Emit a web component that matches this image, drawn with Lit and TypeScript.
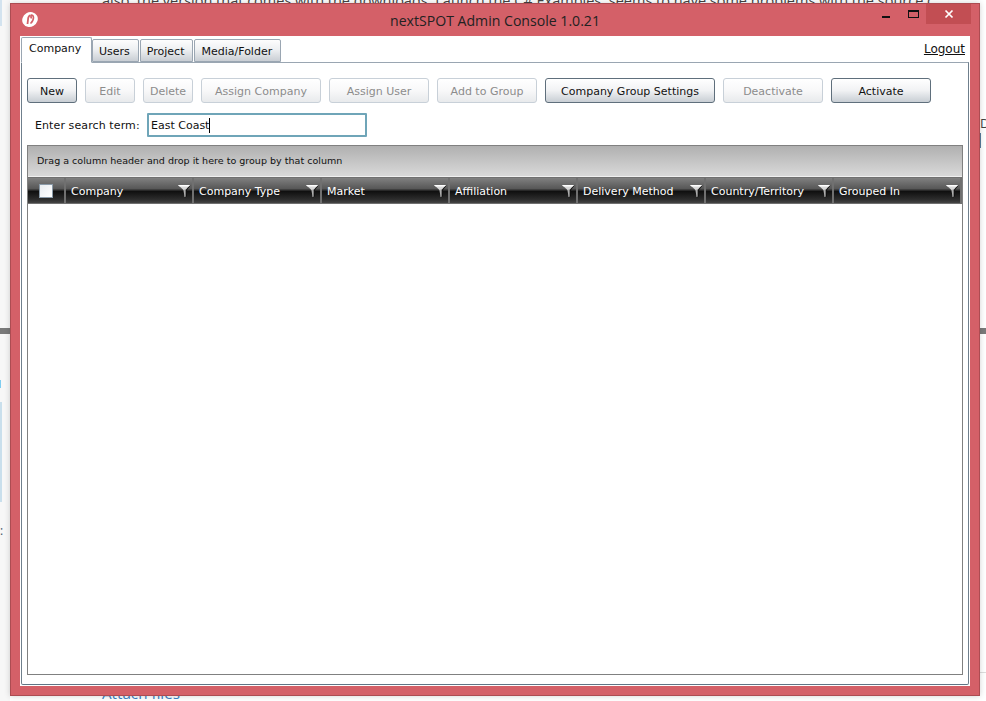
import { LitElement, html, css, svg } from "lit";
import { customElement } from "lit/decorators.js";

const actions: [string, number, boolean][] = [
  ["New", 50, true], ["Edit", 50, false], ["Delete", 50, false], ["Assign Company", 120, false],
  ["Assign User", 100, false], ["Add to Group", 100, false], ["Company Group Settings", 170, true],
  ["Deactivate", 100, false], ["Activate", 100, true],
];
const columns = ["Company", "Company Type", "Market", "Affiliation", "Delivery Method", "Country/Territory", "Grouped In"];

const funnel = svg`<svg class="funnel" width="13" height="13" viewBox="0 0 13 13">
  <path d="M1 0.5 H12.5 L9 5 V11 L7.5 12.5 V5.5 Z" fill="#111"/>
  <path d="M0 0 H12 L8 4.5 V11 L6.5 12 L5.5 5 Z" fill="#d8d8d8"/>
  <path d="M0 0 H12 L10.5 1.5 H1.5 Z" fill="#fff"/>
  <path d="M6.6 4.5 H8 V11 L6.5 12 Z" fill="#777"/>
</svg>`;

@customElement("app-root")
export class AppRoot extends LitElement {
  static styles = css`
    :host { display: block; position: relative; width: 986px; height: 701px; overflow: hidden; background: #fff; font-family: "DejaVu Sans", sans-serif; }
    .bg-text { position: absolute; left: 102px; top: -9px; white-space: nowrap; font: 14.5px "Open Sans", sans-serif; color: #444; }
    .bg-link { position: absolute; left: 102px; top: 683px; font: 15.2px "Open Sans", sans-serif; color: #3a7fc4; }
    .bg-bar { position: absolute; left: 0; top: 328px; width: 986px; height: 6px; background: #7a7a7a; }
    .bg-panel { position: absolute; left: 0; top: 0; width: 10px; height: 701px; background: #f7f7f7; }
    .bg-top { position: absolute; left: 0; top: 0; width: 2px; height: 26px; background: #d3e3ef; }
    .bg-blue { position: absolute; left: 0; top: 380px; width: 1px; height: 8px; background: #7fcdf0; }
    .bg-box { position: absolute; left: 0; top: 402px; width: 2px; height: 100px; background: #c9dfec; }
    .bg-line { position: absolute; left: 980px; top: 672px; width: 6px; height: 1px; background: #ddd; }
    .bg-colon { position: absolute; left: 0; top: 522px; font: 12px "Open Sans", sans-serif; color: #456; }
    .bg-o { position: absolute; left: 980px; top: 114px; font: 13px "Open Sans", sans-serif; color: #444; }
    .bg-mark { position: absolute; left: 980px; top: 133px; width: 1px; height: 15px; background: #5a7f9f; }

    .window { position: absolute; left: 10px; top: 3px; width: 970px; height: 693px; box-sizing: border-box; background: #d46068; border: 1px solid #ac4c52; box-shadow: 0 0 6px rgba(0,0,0,.18); display: flex; flex-direction: column; padding: 0 9px 9px 9px; }
    .titlebar { height: 32px; flex: none; display: flex; align-items: center; position: relative; }
    .logo { position: absolute; left: 1px; top: 6px; }
    .title { flex: 1; text-align: center; font: 14.1px "Open Sans", sans-serif; color: #222; padding-top: 1px; }
    .ctl { position: absolute; display: flex; align-items: center; justify-content: center; }
    .min { left: 862px; top: 12px; width: 8px; height: 2px; background: #111; }
    .max { left: 888px; top: 6px; width: 9px; height: 5px; border: 1px solid #111; border-top-width: 2px; }
    .close { left: 906px; top: 0; width: 45px; height: 20px; background: #c24e53; color: #fff; }

    .client { flex: 1; background: #fff; display: flex; flex-direction: column; padding: 1px; min-height: 0; }
    .tabs { display: flex; align-items: flex-end; height: 25px; flex: none; position: relative; z-index: 1; }
    .tab { box-sizing: border-box; height: 23px; margin-left: 1px; padding: 4px 8px 0 6px; border: 1px solid #9aa6b2; border-radius: 2px 2px 0 0; background: linear-gradient(#fdfdfd, #eef0f2 45%, #c9ced4); font-size: 11px; color: #111; white-space: nowrap; line-height: 15px; }
    .tab.active { height: 26px; margin-left: 0; width: 71px; padding: 3px 7px 0; background: #fff; border-bottom-color: #fff; margin-bottom: -1px; }
    .active + .tab { margin-left: 0; }
    .logout { position: absolute; right: 4px; top: 4px; font-size: 12px; color: #111; text-decoration: underline; line-height: 16px; }

    .panel { flex: 1; border: 1px solid #9aa6b2; border-left-color: #6f7f8c; border-right-color: #6f7f8c; border-bottom-color: #5f7585; border-radius: 0 0 2px 2px; padding: 15px 5px 9px 5px; display: flex; flex-direction: column; min-height: 0; }
    .actions { display: flex; gap: 8px; height: 25px; flex: none; }
    .btn { box-sizing: border-box; border: 1px solid #5f6f7c; border-radius: 3px; background: linear-gradient(#ffffff, #f1f2f4 50%, #c8ced4); font: 11px "DejaVu Sans", sans-serif; color: #111; padding: 2px 0 0; }
    .btn.off { border-color: #c8d0d8; background: linear-gradient(#fff, #f8f8f9 50%, #e8eaec); color: #8c8c8c; }
    .search { display: flex; align-items: center; height: 24px; margin: 10px 0 8px 8px; flex: none; font-size: 11px; color: #111; }
    .search label { width: 112px; padding-top: 1px; letter-spacing: .1px; }
    .search .input { box-sizing: border-box; width: 220px; height: 24px; border: 2px solid #6fa5b8; border-radius: 1px; padding: 1px 2px 0; font-size: 11px; line-height: 20px; color: #111; display: flex; align-items: center; }
    .caret { width: 1px; height: 15px; background: #000; }

    .grid { flex: 1; border: 1px solid #808080; display: flex; flex-direction: column; min-height: 0; }
    .group { height: 31px; flex: none; box-sizing: border-box; padding: 8px 9px 0; background: linear-gradient(#b0b0b0, #d9d9d9); border-bottom: 1px solid #f0f0f0; font-size: 9.55px; line-height: 13px; color: #111; }
    .head { display: flex; height: 27px; flex: none; box-sizing: border-box; }
    .cell { box-sizing: border-box; width: 128px; flex: none; border: 1px solid #707070; border-left-color: #555; border-right-width: 2px; border-left-width: 0; background: linear-gradient(#808080, #585858 42%, #101010 54%, #2c2c2c 85%, #444); color: #fff; font-size: 11px; position: relative; padding: 6px 0 0 5px; line-height: 15px; white-space: nowrap; }
    .cell:first-child { width: 38px; }
    .funnel { position: absolute; right: 1px; top: 7px; }
    .check { position: absolute; left: 11px; top: 6px; width: 14px; height: 14px; box-sizing: border-box; border: 1px solid #8a9aa8; background: linear-gradient(135deg, #e8ecf0, #fff); }
    .body { flex: 1; background: #fff; }
  `;

  render() {
    return html`
      <div class="bg-panel"></div><div class="bg-top"></div><div class="bg-blue"></div><div class="bg-box"></div>
      <div class="bg-bar"></div><div class="bg-line"></div><div class="bg-mark"></div>
      <div class="bg-text">also, the version that comes with the downloads. Launch the C# Examples, seems to have some problems with the source c</div>
      <div class="bg-link">Attach files</div>
      <div class="bg-colon">:</div>
      <div class="bg-o">D</div>
      <div class="window">
        <div class="titlebar">
          <svg class="logo" width="18" height="18" viewBox="0 0 18 18">
            <ellipse cx="9" cy="9.5" rx="8" ry="7.2" transform="rotate(-30 9 9.5)" fill="#fff"/>
            <path d="M6.5 14 L7.2 8 Q7.5 6 9.5 5" fill="none" stroke="#d46068" stroke-width="1.8"/>
            <path d="M9.5 13.5 Q12.5 11 12.5 7.5 Q12.2 5 10.5 5 Q9.5 6.5 10.5 8.5" fill="none" stroke="#d46068" stroke-width="1.6"/>
          </svg>
          <div class="title">nextSPOT Admin Console 1.0.21</div>
          <div class="ctl min"></div>
          <div class="ctl max"></div>
          <div class="ctl close">
            <svg width="10" height="10" viewBox="0 0 10 10"><path d="M1.5 1.5 L8.5 8.5 M8.5 1.5 L1.5 8.5" stroke="#fff" stroke-width="1.7"/></svg>
          </div>
        </div>
        <div class="client">
          <div class="tabs">
            <div class="tab active">Company</div>
            <div class="tab">Users</div>
            <div class="tab">Project</div>
            <div class="tab">Media/Folder</div>
            <div class="logout">Logout</div>
          </div>
          <div class="panel">
            <div class="actions">
              ${actions.map(([t, w, on]) => html`<button class="btn ${on ? "" : "off"}" style="width:${w}px">${t}</button>`)}
            </div>
            <div class="search">
              <label>Enter search term:</label>
              <div class="input">East Coast<span class="caret"></span></div>
            </div>
            <div class="grid">
              <div class="group">Drag a column header and drop it here to group by that column</div>
              <div class="head">
                <div class="cell"><span class="check"></span></div>
                ${columns.map((c) => html`<div class="cell">${c}${funnel}</div>`)}
              </div>
              <div class="body"></div>
            </div>
          </div>
        </div>
      </div>
    `;
  }
}
